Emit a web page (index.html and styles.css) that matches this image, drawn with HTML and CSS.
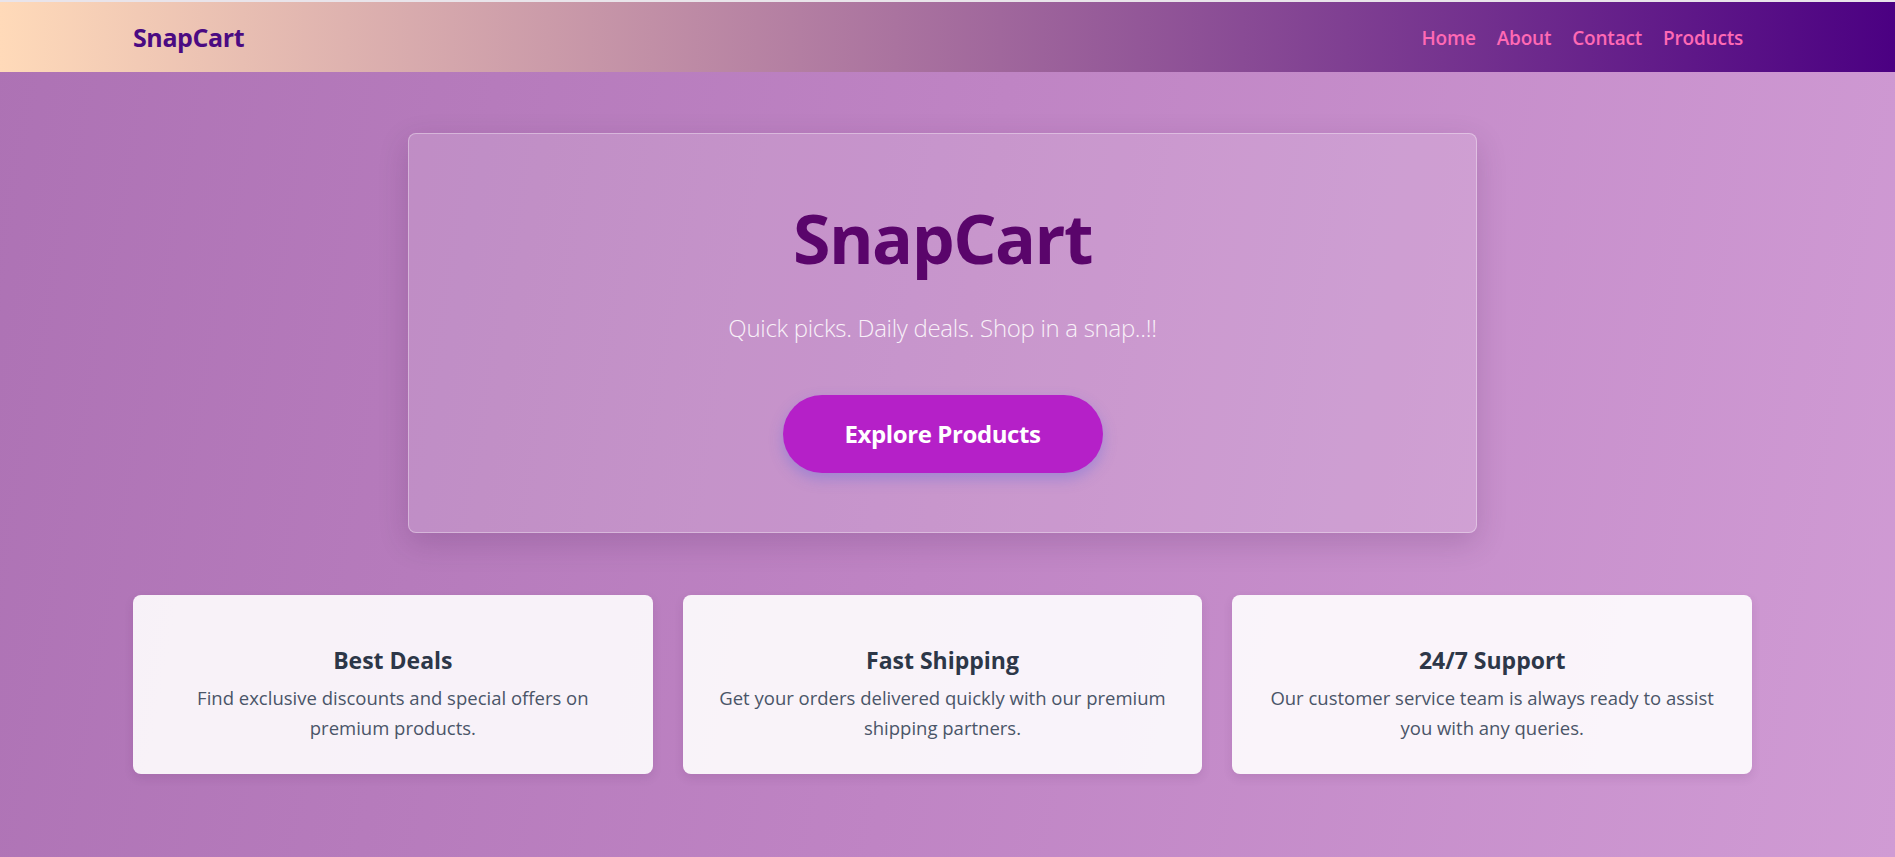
FILE: index.html
```html
<!DOCTYPE html>
<html lang="en">
<head>
<meta charset="UTF-8">
<title>SnapCart</title>
<link rel="stylesheet" href="styles.css">
</head>
<body>
<header class="navbar">
  <div class="nav-inner">
    <a class="logo" href="#">SnapCart</a>
    <nav class="nav-links">
      <a href="#">Home</a>
      <a href="#">About</a>
      <a href="#">Contact</a>
      <a href="#">Products</a>
    </nav>
  </div>
</header>
<main class="page">
  <section class="hero">
    <h1 class="hero-title">SnapCart</h1>
    <p class="hero-sub">Quick picks. Daily deals. Shop in a snap..!!</p>
    <a class="hero-btn" href="#">Explore Products</a>
  </section>
  <section class="features">
    <div class="feature">
      <h3>Best Deals</h3>
      <p>Find exclusive discounts and special offers on premium products.</p>
    </div>
    <div class="feature">
      <h3>Fast Shipping</h3>
      <p>Get your orders delivered quickly with our premium shipping partners.</p>
    </div>
    <div class="feature">
      <h3>24/7 Support</h3>
      <p>Our customer service team is always ready to assist you with any queries.</p>
    </div>
  </section>
</main>
</body>
</html>
```
FILE: styles.css
```css
* { box-sizing: border-box; }
html, body { margin: 0; padding: 0; }
body {
  font-family: "Open Sans", "Noto Sans", sans-serif;
  min-height: 857px;
  background: linear-gradient(100deg, #ad72b4 0%, #bf84c4 50%, #d09bd4 100%);
  border-top: 2px solid #e9e4ea;
}
.navbar {
  height: 70px;
  background: linear-gradient(to right, #ffdab9, #4b0082);
}
.nav-inner {
  height: 100%;
  padding: 0 152px 0 133px;
  display: flex;
  align-items: center;
  justify-content: space-between;
}
.logo {
  color: #4b0a82;
  font-size: 25px;
  font-weight: 700;
  text-decoration: none;
  letter-spacing: -0.4px;
}
.nav-links { display: flex; gap: 21px; padding-top: 2px; }
.nav-links a {
  color: #ff69b4;
  font-size: 19px;
  font-weight: 600;
  text-decoration: none;
  letter-spacing: -0.2px;
}
.page {
  padding: 61px 143px 60px 133px;
}
.hero {
  width: 1069px;
  margin: 0 auto;
  height: 400px;
  padding: 59px 40px 0;
  text-align: center;
  background: rgba(255, 255, 255, 0.15);
  border: 1px solid rgba(255, 255, 255, 0.35);
  border-radius: 8px;
  box-shadow: 0 10px 30px rgba(60, 20, 70, 0.18);
}
.hero-title {
  margin: 0;
  font-size: 68px;
  line-height: 90px;
  font-weight: 700;
  color: #5a056b;
  letter-spacing: -1.5px;
}
.hero-sub {
  margin: 29px 0 51px;
  font-size: 24px;
  line-height: 32px;
  font-weight: 300;
  color: #f8f0f8;
  letter-spacing: -0.3px;
}
.hero-btn {
  display: inline-block;
  width: 320px;
  height: 78px;
  line-height: 78px;
  border-radius: 39px;
  background: #b520c8;
  color: #fff;
  font-size: 24px;
  font-weight: 700;
  text-decoration: none;
  letter-spacing: -0.4px;
  box-shadow: 0 6px 14px rgba(90, 100, 220, 0.35);
}
.features {
  margin-top: 62px;
  display: grid;
  grid-template-columns: repeat(3, 1fr);
  gap: 30px;
}
.feature {
  height: 179px;
  padding: 48px 28px 20px;
  text-align: center;
  background: rgba(255, 255, 255, 0.9);
  border-radius: 8px;
  box-shadow: 0 4px 10px rgba(80, 30, 90, 0.12);
}
.feature h3 {
  margin: 0 0 6px;
  font-size: 23px;
  line-height: 34px;
  font-weight: 700;
  color: #2d3748;
}
.feature p {
  margin: 0;
  font-size: 18.5px;
  line-height: 30px;
  color: #4a5568;
}
```
